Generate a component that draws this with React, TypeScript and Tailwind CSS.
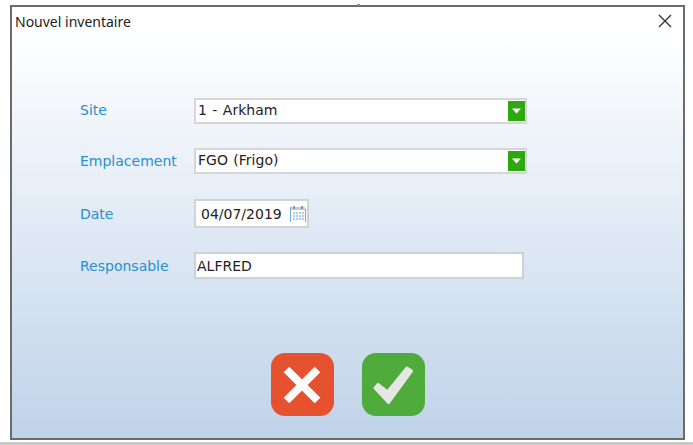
const LABEL = "w-[114px] shrink-0 text-[14px] text-[#2a8fd0] font-['DejaVu_Sans',sans-serif]"
const VALUE = "text-[14px] text-[#222] font-['DejaVu_Sans',sans-serif]"

function Arrow() {
  return (
    <span className="w-[17px] h-[20px] bg-[#2ea80f] flex items-center justify-center">
      <svg width="9" height="6" viewBox="0 0 9 6">
        <path d="M0 .5h9L4.5 5.5z" fill="#fff" />
      </svg>
    </span>
  )
}

function Calendar() {
  return (
    <svg width="18" height="18" viewBox="0 0 18 18">
      <rect x="1" y="2" width="16" height="15" fill="#fff" />
      <rect x="1" y="2" width="1" height="15" fill="#6fb2e6" />
      <rect x="16" y="4" width="1" height="13" fill="#8aa0b4" />
      <rect x="2" y="2" width="14" height="3" fill="#c3ccd6" />
      <rect x="4" y="1" width="2" height="3" fill="#8f979f" />
      <rect x="12" y="1" width="2" height="3" fill="#8f979f" />
      <path d="M4 7h2v2H4zM7 7h2v2H7zM10 7h2v2h-2zM13 7h2v2h-2zM4 10h2v2H4zM7 10h2v2H7zM10 10h2v2h-2zM13 10h2v2h-2zM4 13h2v2H4zM7 13h2v2H7zM10 13h2v2h-2zM13 13h2v2h-2z" fill="#a9cdf0" />
    </svg>
  )
}

function Select({ value }: { value: string }) {
  return (
    <div className="w-[333px] h-[26px] bg-white border-2 border-[#d4d6d9] flex items-center justify-between pl-[2px]">
      <span className={VALUE + " pb-[2px] [word-spacing:1px]"}>{value}</span>
      <Arrow />
    </div>
  )
}

export default function App() {
  return (
    <div className="w-[693px] h-[445px] bg-white flex flex-col overflow-hidden">
      <div className="pl-[10px] pt-[5px]">
        <div className="relative w-[675px] h-[435px] border-2 border-[#6b6b6b] bg-gradient-to-b from-white from-[6%] to-[#bfd3e9] flex flex-col">
          <span className="absolute left-[345px] top-[-3px] w-[3px] h-[2px] bg-[#8a8a8a]" />
          <div className="h-[28px] flex items-center justify-between pl-[3px] pr-[11px] shrink-0">
            <span className="text-[14px] text-[#222] font-['Noto_Sans',sans-serif]">Nouvel inventaire</span>
            <svg width="14" height="14" viewBox="0 0 14 14">
              <path d="M1 1l12 12M13 1L1 13" stroke="#333" strokeWidth="1.4" fill="none" />
            </svg>
          </div>
          <div className="pl-[68px] pt-[63px] flex flex-col">
            <div className="flex items-center h-[26px]">
              <span className={LABEL + " pb-[2px]"}>Site</span>
              <Select value="1 - Arkham" />
            </div>
            <div className="flex items-center h-[26px] mt-[24px]">
              <span className={LABEL}>Emplacement</span>
              <Select value="FGO (Frigo)" />
            </div>
            <div className="flex items-center h-[29px] mt-[25px]">
              <span className={LABEL + " pt-[2px]"}>Date</span>
              <div className="w-[115px] h-[29px] bg-white border-2 border-[#d0d3d8] flex items-center justify-between pl-[5px]">
                <span className={VALUE + " pt-[2px]"}>04/07/2019</span>
                <Calendar />
              </div>
            </div>
            <div className="flex items-center h-[27px] mt-[24px]">
              <span className={LABEL + " pt-[2px]"}>Responsable</span>
              <div className="w-[330px] h-[27px] bg-white border-2 border-[#cdd0d6] flex items-center pl-[1px]">
                <span className={VALUE + " pt-[2px]"}>ALFRED</span>
              </div>
            </div>
          </div>
          <div className="flex justify-center gap-[28px] mt-[74px]">
            <button className="w-[63px] h-[63px] rounded-[14px] bg-[#e6512f] flex items-center justify-center">
              <svg width="42" height="42" viewBox="0 0 42 42">
                <path d="M5.5 5.5l31 31M36.5 5.5l-31 31" stroke="#fff" strokeWidth="8" fill="none" />
              </svg>
            </button>
            <button className="w-[63px] h-[63px] rounded-[14px] bg-[#4fab3c] flex items-center justify-center">
              <svg width="44" height="44" viewBox="0 0 44 44">
                <path d="M4 25 7 21.5 16.5 29 36 5 40.5 8 17.5 39.5z" fill="#e6e6e6" stroke="#e6e6e6" strokeWidth="3" strokeLinejoin="round" />
              </svg>
            </button>
          </div>
        </div>
      </div>
      <div className="h-[3px] bg-[#c8c8c8] mt-[2px]" />
    </div>
  )
}
